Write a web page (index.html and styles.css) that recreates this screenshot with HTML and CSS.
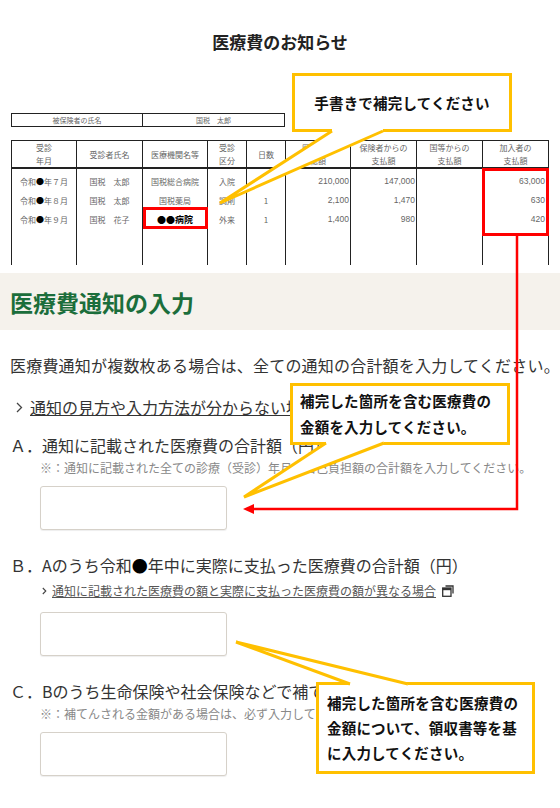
FILE: index.html
```html
<!DOCTYPE html>
<html lang="ja">
<head>
    <meta charset="UTF-8">
    <title>医療費通知の入力</title>
    <link rel="stylesheet" href="styles.css">
</head>
<body>
<div class="page">
    <!-- 医療費のお知らせ (sample notice) -->
    <section class="notice">
        <h1 class="notice-title">医療費のお知らせ</h1>
        <table class="insured">
            <colgroup><col style="width:131px"><col style="width:142px"></colgroup>
            <tr><td>被保険者の氏名</td><td>国税　太郎</td></tr>
        </table>
        <table class="records">
            <colgroup>
                <col style="width:65px"><col style="width:66px"><col style="width:65px">
                <col style="width:39px"><col style="width:39px"><col style="width:65px">
                <col style="width:66px"><col style="width:66px"><col style="width:66px">
            </colgroup>
            <thead>
                <tr>
                    <th>受診<br>年月</th>
                    <th>受診者氏名</th>
                    <th>医療機関名等</th>
                    <th>受診<br>区分</th>
                    <th>日数</th>
                    <th>医療費の<br>総額</th>
                    <th>保険者からの<br>支払額</th>
                    <th>国等からの<br>支払額</th>
                    <th>加入者の<br>支払額</th>
                </tr>
            </thead>
            <tbody>
                <tr class="first">
                    <td>令和<b class="dot">●</b>年７月</td><td>国税　太郎</td><td>国税総合病院</td><td>入院</td><td></td>
                    <td class="num">210,000</td><td class="num">147,000</td><td class="num"></td><td class="num last">63,000</td>
                </tr>
                <tr>
                    <td>令和<b class="dot">●</b>年８月</td><td>国税　太郎</td><td>国税薬局</td><td>調剤</td><td>1</td>
                    <td class="num">2,100</td><td class="num">1,470</td><td class="num"></td><td class="num last">630</td>
                </tr>
                <tr>
                    <td>令和<b class="dot">●</b>年９月</td><td>国税　花子</td><td class="handwritten">●●病院</td><td>外来</td><td>1</td>
                    <td class="num">1,400</td><td class="num">980</td><td class="num"></td><td class="num last">420</td>
                </tr>
                <tr class="filler">
                    <td></td><td></td><td></td><td></td><td></td><td></td><td></td><td></td><td></td>
                </tr>
            </tbody>
        </table>
    </section>

    <div class="section-head">
        <h2>医療費通知の入力</h2>
    </div>

    <main class="form">
        <p class="lead">医療費通知が複数枚ある場合は、全ての通知の合計額を入力してください。</p>
        <a class="guide-link" href="#">
            <svg class="chevron" width="7" height="11" viewBox="0 0 7 11"><path d="M1 1l4.5 4.5L1 10" fill="none" stroke="#444" stroke-width="1.3"/></svg>
            <span>通知の見方や入力方法が分からない場合はこちら</span>
        </a>

        <div class="field">
            <div class="field-title">Ａ．通知に記載された医療費の合計額（円）</div>
            <div class="field-note">※：通知に記載された全ての診療（受診）年月の自己負担額の合計額を入力してください。</div>
            <input class="amount" type="text">
        </div>

        <div class="field">
            <div class="field-title">Ｂ．Aのうち令和<b class="dot">●</b>年中に実際に支払った医療費の合計額（円）</div>
            <a class="field-link" href="#">
                <svg class="chevron-sm" width="5" height="8" viewBox="0 0 5 8"><path d="M0.8 1l3 3-3 3" fill="none" stroke="#444" stroke-width="1.1"/></svg>
                <span>通知に記載された医療費の額と実際に支払った医療費の額が異なる場合</span>
                <svg class="new-window" width="12" height="12" viewBox="0 0 12 12">
                    <path d="M3.5 1h7.5v7.5" fill="none" stroke="#333" stroke-width="1.3"/>
                    <rect x="0.7" y="3" width="8.3" height="8.3" fill="#fff" stroke="#333" stroke-width="1.3"/>
                    <rect x="0.7" y="3" width="8.3" height="2.2" fill="#333"/>
                </svg>
            </a>
            <input class="amount" type="text">
        </div>

        <div class="field">
            <div class="field-title">Ｃ．Bのうち生命保険や社会保険などで補てんされる金額（円）</div>
            <div class="field-note">※：補てんされる金額がある場合は、必ず入力してください。</div>
            <input class="amount" type="text">
        </div>
    </main>

    <!-- 吹き出し -->
    <div class="callout callout-top">手書きで補完してください</div>
    <div class="callout callout-a">補完した箇所を含む医療費の<br>金額を入力してください。</div>
    <div class="callout callout-c">補完した箇所を含む医療費の<br>金額について、領収書等を基<br>に入力してください。</div>

    <!-- 赤枠・矢印・吹き出しの引き出し線 -->
    <svg class="marks" width="560" height="808" viewBox="0 0 560 808">
        <rect x="144.5" y="208.5" width="62" height="19" fill="none" stroke="#f00" stroke-width="3"/>
        <rect x="483.5" y="169.5" width="64" height="65" fill="none" stroke="#f00" stroke-width="3"/>
        <polyline points="517,236 517,509 252,509" fill="none" stroke="#f00" stroke-width="2.5"/>
        <polygon points="243,509 254,504 254,514" fill="#f00"/>

        <polygon points="332,128 383,128 383,131 220,203 332,131" fill="#fff"/>
        <polyline points="332,131 220,203 383,131" fill="none" stroke="#ffc000" stroke-width="3"/>

        <polygon points="326,441 384,441 384,443 244,497 326,443" fill="#fff"/>
        <polyline points="326,443 244,497 384,443" fill="none" stroke="#ffc000" stroke-width="3"/>

        <polygon points="350,687 408,687 408,684 236,642 350,684" fill="#fff"/>
        <polyline points="350,684 236,642 408,684" fill="none" stroke="#ffc000" stroke-width="3"/>
    </svg>
</div>
</body>
</html>
```

FILE: styles.css
```css
body {
    margin: 0;
    font-family: "Noto Sans CJK JP", sans-serif;
    color: #333;
    background: #fff;
}
.page {
    position: relative;
    width: 560px;
    height: 808px;
    overflow: hidden;
}

/* notice */
.notice {
    height: 273px;
    padding: 30px 0 0 11px;
    box-sizing: border-box;
}
.notice-title {
    margin: 0;
    padding-right: 11px;
    font-size: 17px;
    line-height: 24px;
    font-weight: bold;
    text-align: center;
    color: #222;
}
.insured {
    margin-top: 59px;
    width: 273px;
    table-layout: fixed;
    border-collapse: collapse;
    font-size: 7px;
    color: #666;
}
.insured td {
    height: 12px;
    padding: 0;
    line-height: 12px;
    text-align: center;
    border: 1px solid #222;
}
.records {
    margin-top: 13px;
    width: 537px;
    table-layout: fixed;
    border-collapse: collapse;
    font-size: 8px;
    color: #666;
}
.records th {
    height: 26px;
    padding: 0;
    line-height: 13px;
    font-weight: normal;
    border: 1px solid #222;
    border-bottom-width: 2px;
}
.records td {
    height: 19px;
    padding: 0;
    line-height: 19px;
    text-align: center;
    white-space: nowrap;
    border-left: 1px solid #222;
    border-right: 1px solid #222;
}
.records tr.first td {
    padding-top: 3px;
}
.records tr.filler td {
    height: 36px;
}
.records td.num {
    padding-right: 1px;
    text-align: right;
    font-family: "Liberation Sans", sans-serif;
    font-size: 8.5px;
}
.records td.last {
    padding-right: 3px;
}
.records td.handwritten {
    color: #000;
    font-weight: bold;
    font-size: 9px;
}
.dot {
    color: #000;
}

/* input form */
.section-head {
    display: flex;
    align-items: center;
    height: 57px;
    padding-left: 10px;
    background: #f5f2ec;
}
.section-head h2 {
    margin: 0;
    font-size: 23px;
    font-weight: bold;
    color: #1b6e3b;
}
.form {
    padding: 23px 0 0 10px;
}
.lead {
    margin: 0;
    font-size: 16px;
    line-height: 24px;
    letter-spacing: 0.2px;
    white-space: nowrap;
}
.guide-link {
    display: flex;
    align-items: center;
    margin-top: 18px;
    font-size: 16px;
    line-height: 24px;
    color: #333;
    text-decoration: none;
}
.guide-link span {
    text-decoration: underline;
}
.chevron {
    margin: 0 7px 0 6px;
}
.field {
    margin-top: 23px;
}
.field:first-of-type {
    margin-top: 14px;
}
.field-title {
    font-size: 16px;
    line-height: 24px;
    white-space: nowrap;
}
.field-note {
    margin: 2px 0 0 30px;
    font-size: 12px;
    line-height: 18px;
    color: #888;
    white-space: nowrap;
}
.field-link {
    display: flex;
    align-items: center;
    margin: 5px 0 0 32px;
    font-size: 12px;
    line-height: 18px;
    color: #555;
    text-decoration: none;
}
.field-link span {
    text-decoration: underline;
}
.chevron-sm {
    margin-right: 5px;
}
.new-window {
    margin-left: 6px;
}
.amount {
    display: block;
    margin: 9px 0 0 30px;
    width: 187px;
    height: 44px;
    box-sizing: border-box;
    border: 1px solid #d6d1c9;
    border-radius: 3px;
    box-shadow: 0 1px 1px rgba(0, 0, 0, 0.07);
    background: #fff;
}
.field-link + .amount {
    margin-top: 12px;
}

/* callouts */
.callout {
    position: absolute;
    z-index: 1;
    box-sizing: border-box;
    background: #fff;
    border: 3px solid #ffc000;
    font-size: 14.5px;
    font-weight: bold;
    color: #111;
    letter-spacing: 0.2px;
    white-space: nowrap;
}
.callout-top {
    left: 292px;
    top: 73px;
    width: 220px;
    height: 59px;
    line-height: 53px;
    text-align: center;
}
.callout-a {
    left: 290px;
    top: 383px;
    width: 220px;
    height: 62px;
    padding: 2px 0 0 7px;
    line-height: 26px;
}
.callout-c {
    left: 316px;
    top: 682px;
    width: 219px;
    height: 92px;
    padding: 5px 0 0 8px;
    line-height: 25px;
}
.marks {
    position: absolute;
    left: 0;
    top: 0;
    z-index: 2;
    pointer-events: none;
}
```
